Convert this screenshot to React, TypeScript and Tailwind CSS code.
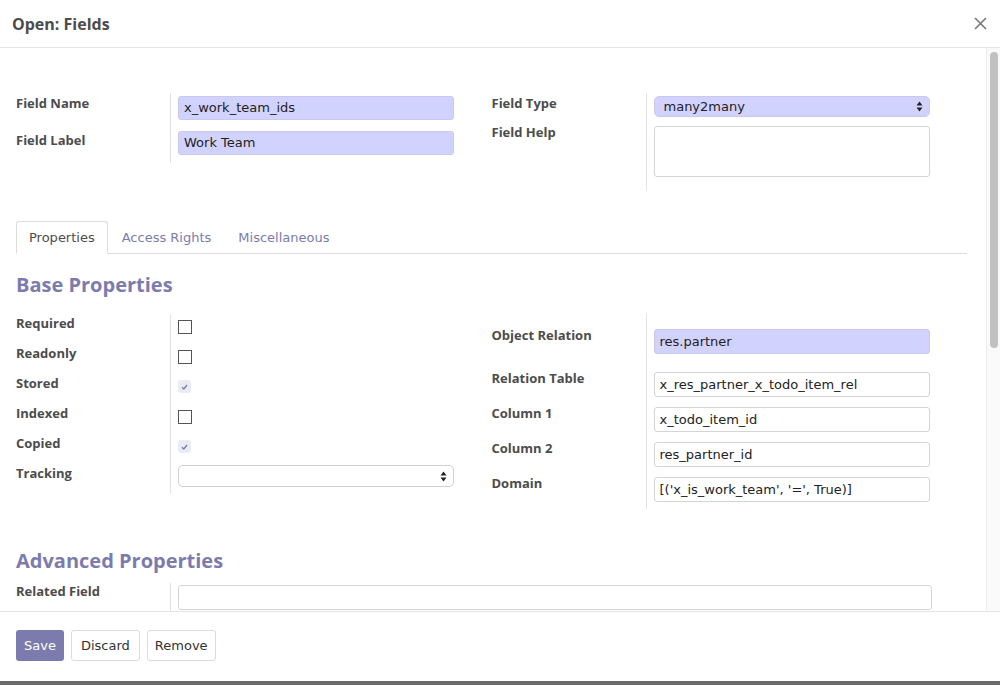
import React from 'react';

const font = { fontFamily: '"DejaVu Sans", "Liberation Sans", sans-serif' };
const boldFont = { fontFamily: '"Open Sans", "DejaVu Sans", sans-serif' };

const Arrows = () => (
  <svg width="7" height="11" viewBox="0 0 7 11" className="shrink-0">
    <path d="M3.5 0.5 L6.5 4.5 H0.5 Z" fill="#222" />
    <path d="M3.5 10.5 L6.5 6.5 H0.5 Z" fill="#222" />
  </svg>
);

const TextInput = ({ value = '', lavender = false, h = 'h-[25px]' }: { value?: string; lavender?: boolean; h?: string }) => (
  <div
    className={`${h} w-[276px] rounded-[3px] border px-[5px] flex items-center text-[13px] text-[#222] ${
      lavender ? 'bg-[#d2d2ff] border-[#c9c9ee]' : 'bg-white border-[#d4d4d4]'
    }`}
  >
    {value}
  </div>
);

const Select = ({ value = '', lavender = false, h = 'h-[21px]' }: { value?: string; lavender?: boolean; h?: string }) => (
  <div
    className={`${h} w-[276px] rounded-[5px] border pl-[9px] pr-[6px] flex items-center justify-between text-[13px] text-[#222] ${
      lavender ? 'bg-[#d2d2ff] border-[#c9c9ee]' : 'bg-white border-[#d0d0d0]'
    }`}
  >
    <span>{value}</span>
    <Arrows />
  </div>
);

const Box = () => <div className="w-[14px] h-[14px] border border-[#555] bg-white" />;

const Checked = () => (
  <div className="w-[13px] h-[13px] rounded-[3px] bg-[#ebebf3] flex items-center justify-center">
    <svg width="7" height="6" viewBox="0 0 7 6">
      <path d="M1 3.2 L2.8 5 L6 1" stroke="#7c7bad" strokeWidth="1.3" fill="none" />
    </svg>
  </div>
);

const Label = ({ children, pt = 'pt-[1px]' }: { children: React.ReactNode; pt?: string }) => (
  <div className={`${pt} text-[13px] leading-[16px] font-bold text-[#4c4c4c] pr-2`} style={boldFont}>
    {children}
  </div>
);

const Tab = ({ children, active = false }: { children: React.ReactNode; active?: boolean }) => (
  <div
    className={`h-[33px] px-[12px] mr-[1px] flex items-center text-[13px] rounded-t-[3px] -mb-px ${
      active ? 'border border-[#dcdcdc] border-b-white bg-white text-[#4c4c4c]' : 'border border-transparent text-[#7c7bad]'
    }`}
  >
    {children}
  </div>
);

export default function App() {
  const leftRows: [string, React.ReactNode][] = [
    ['Required', <Box />],
    ['Readonly', <Box />],
    ['Stored', <Checked />],
    ['Indexed', <Box />],
    ['Copied', <Checked />],
  ];
  const rightRows: [string, string][] = [
    ['Relation Table', 'x_res_partner_x_todo_item_rel'],
    ['Column 1', 'x_todo_item_id'],
    ['Column 2', 'res_partner_id'],
    ['Domain', "[('x_is_work_team', '=', True)]"],
  ];

  return (
    <div className="w-[1000px] h-[685px] bg-white flex flex-col overflow-hidden" style={font}>
      {/* header */}
      <div className="h-[48px] shrink-0 border-b border-[#e5e5e5] flex items-center justify-between pl-[12px] pr-[13px]">
        <span className="text-[16px] font-bold text-[#4c4c4c]" style={boldFont}>Open: Fields</span>
        <svg width="13" height="13" viewBox="0 0 13 13">
          <path d="M1 1 L12 12 M12 1 L1 12" stroke="#777" strokeWidth="1.6" />
        </svg>
      </div>

      {/* body */}
      <div className="flex-1 min-h-0 flex">
        <div className="flex-1 min-w-0 overflow-hidden pl-[16px] pr-[19px] pt-[45px]">
          {/* top groups */}
          <div className="flex items-start">
            <div className="w-[476px] grid grid-cols-[154px_1fr] content-start">
              <Label pt="pt-[2px]">Field Name</Label>
              <div className="border-l border-[#e2e2e2] pl-[7px] pt-[3px] pb-[11px]">
                <TextInput value="x_work_team_ids" lavender h="h-[24px]" />
              </div>
              <Label>Field Label</Label>
              <div className="border-l border-[#e2e2e2] pl-[7px] pb-[8px]">
                <TextInput value="Work Team" lavender h="h-[24px]" />
              </div>
            </div>
            <div className="w-[476px] grid grid-cols-[154px_1fr] content-start">
              <Label pt="pt-[2px]">Field Type</Label>
              <div className="border-l border-[#e2e2e2] pl-[7px] pt-[3px] pb-[6px]">
                <Select value="many2many" lavender />
              </div>
              <Label pt="pt-[1px]">Field Help</Label>
              <div className="border-l border-[#e2e2e2] pl-[7px] pt-[3px] pb-[13px]">
                <div className="h-[51px] w-[276px] rounded-[3px] border border-[#d4d4d4] bg-white" />
              </div>
            </div>
          </div>

          {/* tabs */}
          <div className="mt-[31px] flex border-b border-[#dcdcdc]">
            <Tab active>Properties</Tab>
            <Tab>Access Rights</Tab>
            <Tab>Miscellaneous</Tab>
          </div>

          <div className="mt-[18px] text-[20px] leading-[26px] font-bold text-[#7c7bad]" style={boldFont}>
            Base Properties
          </div>

          <div className="mt-[16px] flex items-start">
            <div className="w-[476px] grid grid-cols-[154px_1fr] content-start">
              {leftRows.map(([l, c]) => (
                <React.Fragment key={l}>
                  <Label>{l}</Label>
                  <div className="h-[30px] border-l border-[#e2e2e2] pl-[7px] pt-[6px]">{c}</div>
                </React.Fragment>
              ))}
              <Label>Tracking</Label>
              <div className="h-[30px] border-l border-[#e2e2e2] pl-[7px] pt-[1px]">
                <Select h="h-[22px]" />
              </div>
            </div>
            <div className="w-[476px] grid grid-cols-[154px_1fr] content-start">
              <div />
              <div className="h-[12px] border-l border-[#e2e2e2]" />
              <Label>Object Relation</Label>
              <div className="border-l border-[#e2e2e2] pl-[7px] pt-[3px] pb-[15px]">
                <TextInput value="res.partner" lavender />
              </div>
              {rightRows.map(([l, v]) => (
                <React.Fragment key={l}>
                  <Label>{l}</Label>
                  <div className="border-l border-[#e2e2e2] pl-[7px] pt-[3px] pb-[7px]">
                    <TextInput value={v} />
                  </div>
                </React.Fragment>
              ))}
            </div>
          </div>

          <div className="mt-[39px] text-[20px] leading-[26px] font-bold text-[#7c7bad]" style={boldFont}>
            Advanced Properties
          </div>
          <div className="mt-[9px] grid grid-cols-[154px_1fr]">
            <Label pt="pt-0">Related Field</Label>
            <div className="border-l border-[#e2e2e2] pl-[7px] pt-[2px] pb-[8px]">
              <div className="h-[25px] w-[754px] rounded-[3px] border border-[#d4d4d4] bg-white" />
            </div>
          </div>
        </div>

        {/* scrollbar */}
        <div className="w-[14px] shrink-0 border-l border-[#ececec] bg-[#fafafa] pt-[4px] flex justify-center">
          <div className="w-[8px] h-[296px] rounded-full bg-[#c1c1c1]" />
        </div>
      </div>

      {/* footer */}
      <div className="h-[70px] shrink-0 border-t border-[#e5e5e5] flex items-center gap-[7px] pl-[16px] pb-[2px]">
        <button className="h-[31px] px-[8px] rounded-[3px] bg-[#7c7bad] text-white text-[13px]">Save</button>
        <button className="h-[31px] px-[9px] rounded-[3px] border border-[#dcdcdc] bg-white text-[#333] text-[13px]">Discard</button>
        <button className="h-[31px] px-[7px] rounded-[3px] border border-[#dcdcdc] bg-white text-[#333] text-[13px]">Remove</button>
      </div>
      <div className="h-[4px] shrink-0 bg-[#6b6b6b]" />
    </div>
  );
}
